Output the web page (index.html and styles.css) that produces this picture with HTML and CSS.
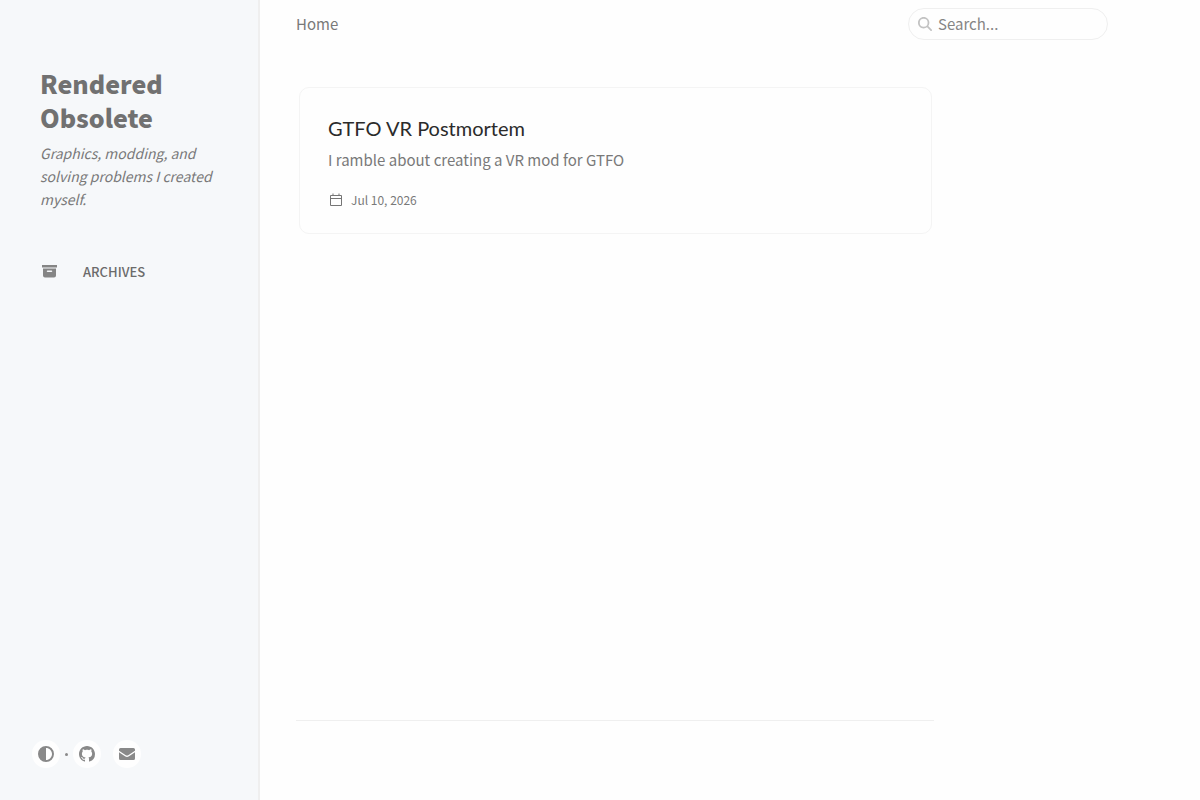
FILE: index.html
```html
<!DOCTYPE html>
<html lang="en">
  <head>
    <meta charset="utf-8" />
    <meta name="viewport" content="width=device-width, initial-scale=1" />
    <title>Rendered Obsolete</title>
    <link rel="stylesheet" href="styles.css">
  </head>
  <body>
    <aside class="sidebar">
      <header class="profile">
        <h1 class="site-title"><a href="/">Rendered Obsolete</a></h1>
        <p class="site-subtitle">Graphics, modding, and solving problems I created myself.</p>
      </header>

      <nav class="side-nav">
        <a href="/archives/" class="nav-link">
          <svg class="nav-icon" viewBox="0 0 15 14" aria-hidden="true">
            <path fill-rule="evenodd" d="M0 1h15v2.500H0zM1 4.500h13v7a2 2 0 0 1-2 2H3a2 2 0 0 1-2-2zM5.500 6.500a.75.75 0 0 0 0 1.500h4a.75.75 0 0 0 0-1.500z" />
          </svg>
          <span>ARCHIVES</span>
        </a>
      </nav>

      <div class="sidebar-bottom">
        <button type="button" class="round-button" aria-label="Switch mode">
          <svg viewBox="0 0 512 512" aria-hidden="true">
            <path d="M448 256c0-106-86-192-192-192v384c106 0 192-86 192-192zM0 256a256 256 0 1 1 512 0 256 256 0 1 1-512 0z" />
          </svg>
        </button>
        <span class="icon-border"></span>
        <a href="https://github.com/" class="round-button" aria-label="github">
          <svg viewBox="0 0 16 16" aria-hidden="true">
            <path d="M8 0C3.58 0 0 3.58 0 8c0 3.54 2.29 6.53 5.47 7.59.4.07.55-.17.55-.38 0-.19-.01-.82-.01-1.49-2.01.37-2.53-.49-2.69-.94-.09-.23-.48-.94-.82-1.13-.28-.15-.68-.52-.01-.53.63-.01 1.08.58 1.23.82.72 1.21 1.87.87 2.33.66.07-.52.28-.87.51-1.07-1.78-.2-3.64-.89-3.64-3.95 0-.87.31-1.59.82-2.15-.08-.2-.36-1.02.08-2.12 0 0 .67-.21 2.2.82.64-.18 1.32-.27 2-.27s1.36.09 2 .27c1.53-1.04 2.2-.82 2.2-.82.44 1.1.16 1.92.08 2.12.51.56.82 1.27.82 2.15 0 3.07-1.87 3.75-3.65 3.95.29.25.54.73.54 1.48 0 1.07-.01 1.93-.01 2.2 0 .21.15.46.55.38A8.01 8.01 0 0 0 16 8c0-4.42-3.58-8-8-8z" />
          </svg>
        </a>
        <a href="mailto:" class="round-button round-button-mail" aria-label="email">
          <svg viewBox="0 0 16 16" aria-hidden="true">
            <path d="M1.500 2h13A1.500 1.500 0 0 1 16 3.500v1.200L9.200 9.200a2.200 2.200 0 0 1-2.400 0L0 4.700V3.500A1.500 1.500 0 0 1 1.500 2zM0 6.300l6 4a3.600 3.600 0 0 0 4 0l6-4v6.200a1.500 1.500 0 0 1-1.500 1.500h-13A1.500 1.500 0 0 1 0 12.500z" />
          </svg>
        </a>
      </div>
    </aside>

    <div class="main-wrapper">
      <div class="container">
        <header class="topbar">
          <nav class="breadcrumb"><span>Home</span></nav>
          <form class="search" role="search">
            <svg class="search-icon" viewBox="0 0 512 512" aria-hidden="true">
              <path d="M416 208c0 45.900-14.900 88.300-40 122.700l126.600 126.700c12.500 12.500 12.500 32.800 0 45.300s-32.800 12.500-45.300 0L330.700 376C296.300 401.200 253.900 416 208 416 93.100 416 0 322.900 0 208S93.100 0 208 0s208 93.100 208 208zM208 352a144 144 0 1 0 0-288 144 144 0 1 0 0 288z" />
            </svg>
            <input type="search" class="search-input" aria-label="Search" placeholder="Search..." autocomplete="off" />
          </form>
        </header>

        <main class="content">
          <article class="card">
            <a href="/posts/gtfo-vr-postmortem/" class="card-body">
              <h2 class="card-title">GTFO VR Postmortem</h2>
              <p class="card-text">I ramble about creating a VR mod for GTFO</p>
              <div class="post-meta">
                <svg class="calendar-icon" viewBox="0 0 14 14" aria-hidden="true">
                  <path d="M1.500 2.500h11v10h-11zM1.500 5.500h11M4 .5v2M10 .5v2" />
                </svg>
                <time datetime="2026-07-10">Jul 10, 2026</time>
              </div>
            </a>
          </article>
        </main>

        <footer class="footer"></footer>
      </div>
    </div>
  </body>
</html>
```
FILE: styles.css
```css
* {
  box-sizing: border-box;
}
body {
  margin: 0;
  display: flex;
  min-height: 100vh;
  background: #fefefe;
  color: #797979;
  font-family: "Source Sans Pro", "Noto Sans CJK SC", sans-serif;
  font-size: 15px;
}
a {
  color: inherit;
  text-decoration: none;
}
h1,
h2,
p {
  margin: 0;
}

/* sidebar */
.sidebar {
  position: sticky;
  top: 0;
  display: flex;
  flex-direction: column;
  flex: none;
  width: 260px;
  height: 100vh;
  background: #f6f8fa;
  border-right: 2px solid #efefef;
}
.profile {
  padding: 66px 32px 0 40px;
}
.site-title {
  font-size: 25px;
  font-weight: 900;
  line-height: 34px;
  color: #717171;
}
.site-subtitle {
  margin-top: 8px;
  font-size: 14px;
  font-style: italic;
  line-height: 23px;
}
.side-nav {
  margin-top: 48px;
}
.nav-link {
  display: flex;
  align-items: center;
  gap: 26px;
  height: 24px;
  padding-left: 42px;
  font-size: 13px;
  font-weight: 500;
  color: #6b6b6b;
}
.nav-icon {
  width: 15px;
  height: 14px;
  fill: #858585;
}
.sidebar-bottom {
  display: flex;
  align-items: center;
  margin-top: auto;
  padding: 0 0 32px 32px;
}
.round-button {
  display: flex;
  align-items: center;
  justify-content: center;
  width: 28px;
  height: 28px;
  padding: 0;
  border: 0;
  border-radius: 50%;
  background: #fefefe;
  cursor: pointer;
}
.round-button svg {
  width: 16px;
  height: 16px;
  fill: #898989;
}
.round-button-mail {
  margin-left: 12px;
}
.icon-border {
  width: 3px;
  height: 3px;
  margin: 0 5px;
  border-radius: 50%;
  background: #898989;
}

/* main column */
.main-wrapper {
  flex: 1;
  min-width: 0;
}
.container {
  display: flex;
  flex-direction: column;
  min-height: 100vh;
  padding: 0 92px 0 36px;
}
.topbar {
  display: flex;
  align-items: center;
  justify-content: space-between;
  height: 48px;
}
.breadcrumb {
  line-height: 24px;
}
.search {
  display: flex;
  align-items: center;
  gap: 6px;
  width: 200px;
  height: 32px;
  padding: 0 9px;
  border: 1px solid #efefef;
  border-radius: 16px;
}
.search-icon {
  flex: none;
  width: 14px;
  height: 14px;
  fill: #c2c2c2;
}
.search-input {
  flex: 1;
  min-width: 0;
  padding: 0 0 2px;
  border: 0;
  outline: 0;
  background: transparent;
  color: inherit;
  font: inherit;
}
.search-input::placeholder {
  color: #858585;
  opacity: 1;
}
.content,
.footer {
  width: 78.6%;
}
.content {
  flex: 1;
  padding: 39px 2px 0 3px;
}
.card {
  border: 1px solid #f4f4f4;
  border-radius: 10px;
}
.card-body {
  display: block;
  padding: 27px 28px 24px;
}
.card-title {
  font-family: Lato, sans-serif;
  font-size: 20px;
  font-weight: 400;
  line-height: 26px;
  color: #2b2b2b;
}
.card-text {
  margin-top: 7px;
  line-height: 24px;
}
.post-meta {
  display: flex;
  align-items: center;
  gap: 8px;
  margin-top: 19px;
  font-size: 12px;
  line-height: 18px;
}
.calendar-icon {
  width: 14px;
  height: 14px;
  margin-left: 1px;
  fill: none;
  stroke: #757575;
}
.footer {
  height: 80px;
  border-top: 1px solid #efefef;
}
```
